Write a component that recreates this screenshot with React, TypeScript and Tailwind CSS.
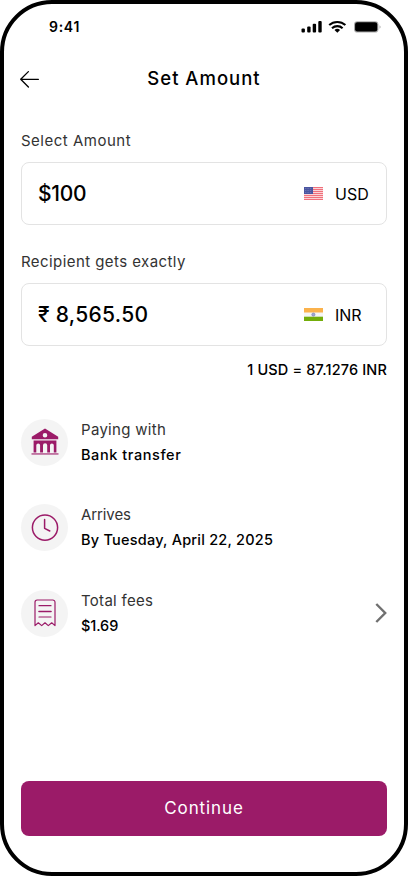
import React from 'react';

interface AmountFieldProps {
  label: string;
  labelClass: string;
  amount: string;
  amountClass: string;
  currency: string;
  flag: React.ReactNode;
}

interface DetailRowProps {
  title: string;
  titleClass: string;
  value: string;
  valueClass: string;
  icon: React.ReactNode;
  trailing?: React.ReactNode;
}

const UsFlag = () => (
  <svg width="19" height="13" viewBox="0 0 19 13">
    <rect width="19" height="13" fill="#fbd3d6" />
    {[0, 2, 4, 6, 8, 10, 12].map((y) => (
      <rect key={y} y={y} width="19" height="1" fill="#f0707c" />
    ))}
    <rect width="9" height="7" fill="#4a55a0" />
    {[1.5, 3.5, 5.5].map((y) => (
      <path key={y} d={`M1 ${y}h7`} stroke="#8b92c6" strokeWidth="0.6" strokeDasharray="0.8 0.9" />
    ))}
  </svg>
);

const IndiaFlag = () => (
  <svg width="19" height="13" viewBox="0 0 19 13">
    <rect width="19" height="13" fill="#f5f5f5" />
    <rect width="19" height="4.5" fill="#fbb24c" />
    <rect y="8.7" width="19" height="4.3" fill="#73ad0a" />
    <circle cx="9.4" cy="6.6" r="1.6" fill="#a3a8cf" stroke="#7079b5" strokeWidth="0.6" />
  </svg>
);

const BankIcon = () => (
  <svg width="28" height="28" viewBox="0 0 28 28" fill="#9b1b68">
    <path fillRule="evenodd" d="M14 .6 27.2 8.8v2.4H.8V8.8L14 .6Zm0 4.3a2.3 2.3 0 1 0 0 4.6 2.3 2.3 0 0 0 0-4.6Z" />
    <path d="M2.6 12.6h22.8v11.8h-2.6v-7.1a1.9 1.9 0 0 0-3.8 0v7.1h-2.8v-7.1a2.1 2.1 0 0 0-4.2 0v7.1H9.1v-7.1a1.9 1.9 0 0 0-3.8 0v7.1H2.6V12.6Z" />
    <path d="M.5 25.4h27v1.1H.5z" />
  </svg>
);

const ClockIcon = () => (
  <svg width="28" height="28" viewBox="0 0 28 28" fill="none" stroke="#9b1b68" strokeWidth="1.5" strokeLinecap="round" strokeLinejoin="round">
    <circle cx="14" cy="13.6" r="12.6" />
    <path d="M13.6 5.6v8.7l5.2 2.7" />
  </svg>
);

const ReceiptIcon = () => (
  <svg width="24" height="28" viewBox="0 0 24 28" fill="none" stroke="#9b1b68" strokeWidth="1.2" strokeLinecap="round" strokeLinejoin="round">
    <path d="M2 26.6V3.2A2.2 2.2 0 0 1 4.2 1h15.6A2.2 2.2 0 0 1 22 3.2v23.4L18.7 23.8 15.3 26.6 12 23.8 8.7 26.6 5.3 23.8 2 26.6Z" />
    <path d="M6 6.7h12M6 18h12" />
    <path d="M6 12.5h12" strokeWidth="1.6" />
  </svg>
);

const StatusBar = () => (
  <div className="flex h-[46px] items-center justify-between pl-[28px] pr-[6px]">
    <span className="text-[14px] font-semibold leading-5 tracking-[0.7px]">9:41</span>
    <svg width="80" height="14" viewBox="0 0 80 14">
      <rect x="0.5" y="8.5" width="3.4" height="4" rx="1" />
      <rect x="6.2" y="6.4" width="3.4" height="6.1" rx="1" />
      <rect x="11.7" y="3.7" width="3.4" height="8.8" rx="1" />
      <rect x="17.3" y="1" width="3.4" height="11.5" rx="1" />
      <g fill="none" stroke="#000" strokeWidth="2.1">
        <path d="M28.2 5.1a12 12 0 0 1 16.2 0" />
        <path d="M31 8.2a7.8 7.8 0 0 1 10.6 0" />
      </g>
      <path d="M33.5 9.9a4.3 4.3 0 0 1 5.6 0l-2.8 2.9Z" />
      <rect x="53" y="1.2" width="24.4" height="11.4" rx="3.4" fill="#aaa" />
      <rect x="54.1" y="2.2" width="22.2" height="9.4" rx="2.3" />
      <path d="M78.6 5.2c1.2.5 1.2 3 0 3.5Z" fill="#999" />
    </svg>
  </div>
);

const AmountField: React.FC<AmountFieldProps> = ({ label, labelClass, amount, amountClass, currency, flag }) => (
  <div>
    <div className={`h-[21px] whitespace-nowrap text-[15px] leading-[20px] text-[#333] ${labelClass}`}>{label}</div>
    <div className="mt-[10px] flex h-[63px] items-center rounded-[8px] border border-[#e3e3e3] pl-4">
      <span className={`flex-1 whitespace-nowrap font-medium ${amountClass}`}>{amount}</span>
      {flag}
      <span className="ml-[12px] w-[51px] text-[16px]">{currency}</span>
    </div>
  </div>
);

const DetailRow: React.FC<DetailRowProps> = ({ title, titleClass, value, valueClass, icon, trailing }) => (
  <div className="flex h-[48px] items-center">
    <div className="flex size-[47px] items-center justify-center rounded-full bg-[#f4f4f4]">{icon}</div>
    <div className="ml-[13px] flex-1 whitespace-nowrap">
      <div className={`text-[15px] leading-[25px] text-[#333] ${titleClass}`}>{title}</div>
      <div className={`font-medium leading-[26px] ${valueClass}`}>{value}</div>
    </div>
    {trailing}
  </div>
);

export default function App() {
  return (
    <div className="h-[876px] w-[408px] bg-white font-['Inter',sans-serif] text-black">
      <div className="flex h-full flex-col rounded-[52px] border-4 border-black px-[17px]">
        <StatusBar />

        <header className="grid h-[58px] grid-cols-[20px_1fr_20px] items-center">
          <svg className="-ml-px" width="20" height="18" viewBox="0 0 20 18" fill="none" stroke="#000" strokeWidth="1.3" strokeLinecap="round" strokeLinejoin="round">
            <path d="M18.4 9.3H.7M8.4 1.6.7 9.3 8.4 17" />
          </svg>
          <h1 className="text-center text-[18.5px] font-medium tracking-[1px]">Set Amount</h1>
        </header>

        <main className="mt-[23px] flex flex-col">
          <AmountField
            label="Select Amount"
            labelClass="tracking-[0.5px]"
            amount="$100"
            amountClass="text-[21px] tracking-[-0.3px]"
            currency="USD"
            flag={<UsFlag />}
          />
          <div className="mt-[27px]">
            <AmountField
              label="Recipient gets exactly"
              labelClass="tracking-[0.43px]"
              amount="₹ 8,565.50"
              amountClass="text-[21px] tracking-[0.3px]"
              currency="INR"
              flag={<IndiaFlag />}
            />
          </div>
          <div className="mt-[13px] h-[22px] whitespace-nowrap text-right text-[14.5px] font-medium leading-[22px] tracking-[0.15px]">1 USD = 87.1276 INR</div>

          <section className="mt-[37px] flex flex-col gap-[37.5px]">
            <DetailRow title="Paying with" titleClass="tracking-[0.3px]" value="Bank transfer" valueClass="text-[14.5px] tracking-[0.57px]" icon={<BankIcon />} />
            <DetailRow title="Arrives" titleClass="tracking-[-0.1px]" value="By Tuesday, April 22, 2025" valueClass="text-[14.5px] tracking-[0.22px]" icon={<ClockIcon />} />
            <DetailRow
              title="Total fees"
              titleClass="tracking-[0.3px]"
              value="$1.69"
              valueClass="text-[14.5px] tracking-[-0.1px]"
              icon={<ReceiptIcon />}
              trailing={
                <svg width="12" height="20" viewBox="0 0 12 20" fill="none" stroke="#707070" strokeWidth="2.4">
                  <path d="m1.3 1 8.9 9-8.9 9" />
                </svg>
              }
            />
          </section>
        </main>

        <button className="mb-[36px] mt-auto h-[55px] rounded-[8px] bg-[#9b1b68] text-[17px] tracking-[0.9px] text-white">Continue</button>
      </div>
    </div>
  );
}
